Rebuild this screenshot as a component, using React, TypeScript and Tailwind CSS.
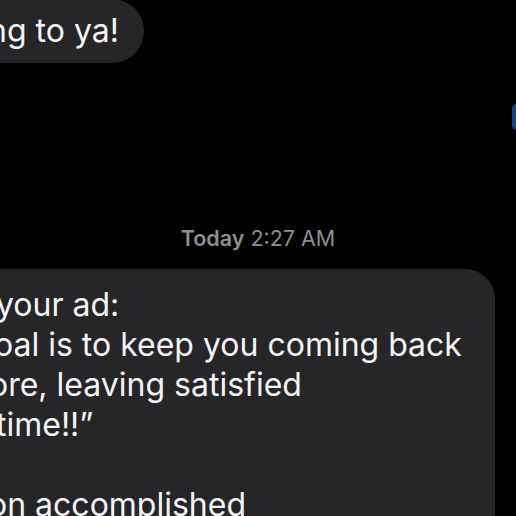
export default function App() {
  return (
    <div
      className="relative h-[516px] w-[516px] overflow-hidden bg-black text-[#f4f4f5]"
      style={{ fontFamily: "Inter, 'Noto Sans', sans-serif" }}
    >
      {/* incoming bubble, partly scrolled off the top */}
      <div className="mt-[-1px] flex">
        <div className="ml-[-40px] rounded-r-[32px] bg-[#262628] pb-[12px] pl-[28px] pr-[25px] pt-[12px] text-[32px] leading-[40px]">
          ng to ya!
        </div>
      </div>

      {/* timestamp */}
      <div className="mt-[163px] text-center text-[21.5px] leading-[24px] text-[#8e8e93]">
        <span className="font-semibold">Today</span> <span>2:27 AM</span>
      </div>

      {/* long incoming bubble */}
      <div className="ml-[-40px] mr-[21px] mt-[19px] rounded-[30px] bg-[#262628] pb-[20px] pt-[16px] text-[32px] leading-[40px]">
        <div className="pl-[36px]">your ad:</div>
        <div className="pl-[34px]">oal is to keep you coming back</div>
        <div className="pl-[29px]">ore, leaving satisfied</div>
        <div className="pl-[36px]">time!!”</div>
        <div className="h-[40px]" />
        <div className="pl-[28px]">on accomplished</div>
      </div>

      {/* edge of a blue bubble at the right border */}
      <div className="absolute left-[512px] top-[104px] h-[26px] w-[10px] rounded-full bg-[#2d6fd6] opacity-60" />
    </div>
  );
}
